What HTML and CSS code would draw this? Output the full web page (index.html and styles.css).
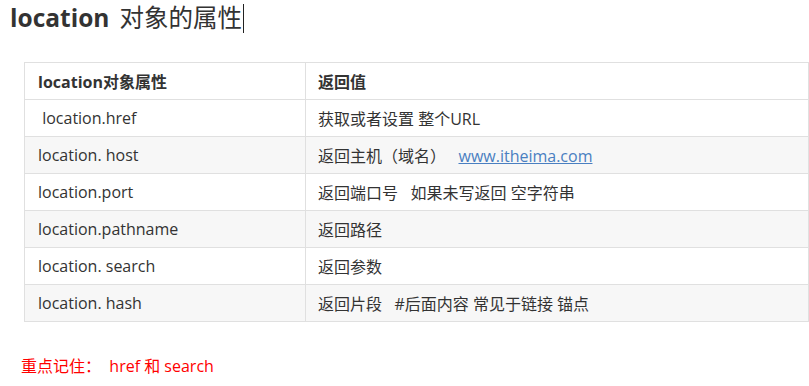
FILE: index.html
```html
<!DOCTYPE html>
<html lang="zh">
<head>
<meta charset="utf-8">
<link rel="stylesheet" href="styles.css">
</head>
<body>
<h1 class="title"><span class="title-en">location</span> 对象的属性<span class="caret"></span></h1>
<table class="props">
  <thead>
    <tr><th class="c1">location对象属性</th><th>返回值</th></tr>
  </thead>
  <tbody>
    <tr><td>&nbsp;location.href</td><td>获取或者设置 整个URL</td></tr>
    <tr class="alt"><td>location. host</td><td>返回主机（域名）&nbsp;&nbsp;&nbsp;<a class="link" href="#">www.itheima.com</a></td></tr>
    <tr><td>location.port</td><td>返回端口号&nbsp;&nbsp;&nbsp;如果未写返回 空字符串</td></tr>
    <tr class="alt"><td>location.pathname</td><td>返回路径</td></tr>
    <tr><td>location. search</td><td>返回参数</td></tr>
    <tr class="alt"><td>location. hash</td><td>返回片段&nbsp;&nbsp;&nbsp;#后面内容 常见于链接 锚点</td></tr>
  </tbody>
</table>
<p class="note">重点记住：&nbsp;&nbsp;href 和 search</p>
</body>
</html>
```
FILE: styles.css
```css
html, body {
  margin: 0;
  padding: 0;
  background: #ffffff;
}
body {
  font-family: "Open Sans", "Noto Sans CJK SC", sans-serif;
  color: #333333;
  width: 809px;
  height: 386px;
  overflow: hidden;
}
.title {
  margin: 0;
  padding: 1px 0 0 10px;
  height: 34px;
  font-size: 24.5px;
  font-weight: normal;
  line-height: 30px;
  color: #333333;
  display: flex;
  align-items: center;
}
.title-en {
  font-weight: bold;
  margin-right: 10px;
}
.caret {
  display: inline-block;
  width: 1px;
  height: 29px;
  background: #222;
  margin-left: 1px;
}
.props {
  margin: 27px 0 0 24px;
  border-collapse: collapse;
  width: 785px;
  font-size: 16px;
  table-layout: fixed;
}
.props th, .props td {
  border: 1px solid #e0e0e0;
  height: 37px;
  padding: 0 0 0 12px;
  text-align: left;
  vertical-align: middle;
  box-sizing: border-box;
}
.props th {
  font-weight: bold;
}
.props .c1 {
  width: 281px;
  padding-left: 13px;
}
.props td:first-child {
  padding-left: 13px;
}
.props tr.alt td {
  background: #f7f7f7;
}
.link {
  color: #4a7fc1;
  text-decoration: underline;
}
.note {
  margin: 31px 0 0 21px;
  color: #ff0000;
  font-size: 16px;
}
```
